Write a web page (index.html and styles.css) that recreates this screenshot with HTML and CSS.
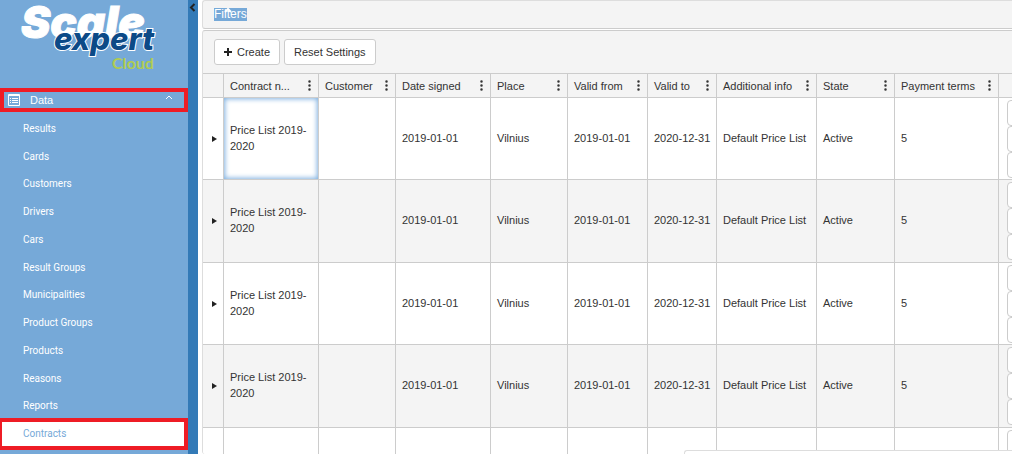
FILE: index.html
```html
<!DOCTYPE html>
<html lang="en">
<head>
    <meta charset="UTF-8">
    <meta name="viewport" content="width=device-width, initial-scale=1.0">
    <title>Contracts</title>
    <link rel="stylesheet" href="styles.css">
</head>
<body>

    <aside class="sidebar">
        <svg class="logo" viewBox="0 0 188 88" role="img" aria-label="Scale expert Cloud">
            <text class="logo-scale" x="21" y="38">Scale</text>
            <text class="logo-expert" x="54" y="50">expert</text>
            <text class="logo-cloud" x="112" y="69">Cloud</text>
        </svg>

        <button class="menu-group" type="button">
            <svg class="menu-icon" viewBox="0 0 12 12">
                <path fill="#fff" fill-rule="evenodd" d="M1 0h10a1 1 0 0 1 1 1v10a1 1 0 0 1-1 1H1a1 1 0 0 1-1-1V1a1 1 0 0 1 1-1zM1 2v9h10V2z"/>
                <path stroke="#fff" d="M2 4.500h1M4 4.500h6M2 6.500h1M4 6.500h6M2 8.500h1M4 8.500h6"/>
            </svg>
            <span>Data</span>
            <svg class="menu-caret" viewBox="0 0 8 5"><path d="M1 4l3-3 3 3" fill="none" stroke="#fff"/></svg>
        </button>

        <nav class="menu">
            <a href="#">Results</a>
            <a href="#">Cards</a>
            <a href="#">Customers</a>
            <a href="#">Drivers</a>
            <a href="#">Cars</a>
            <a href="#">Result Groups</a>
            <a href="#">Municipalities</a>
            <a href="#">Product Groups</a>
            <a href="#">Products</a>
            <a href="#">Reasons</a>
            <a href="#">Reports</a>
            <a href="#" class="active">Contracts</a>
        </nav>
    </aside>

    <button class="collapse" type="button" aria-label="Collapse menu">
        <svg viewBox="0 0 7 9"><path d="M5.500 1L2 4.500 5.500 8" fill="none" stroke="#222" stroke-width="2"/></svg>
    </button>

    <main class="content">
        <section class="filters">
            <a href="#" class="filters-title">Filters<svg class="filters-caret" viewBox="0 0 8 5"><path d="M1 4l3-3 3 3" fill="none" stroke="#fff" stroke-width="2"/></svg></a>
        </section>

        <section class="grid">
            <div class="toolbar">
                <button class="btn" type="button"><svg class="plus" viewBox="0 0 8 8"><path d="M4 0v8M0 4h8" stroke="#222" stroke-width="2"/></svg>Create</button>
                <button class="btn" type="button">Reset Settings</button>
            </div>

            <table>
                <colgroup>
                    <col class="col-expand">
                    <col class="col-number">
                    <col class="col-customer">
                    <col class="col-signed">
                    <col class="col-place">
                    <col class="col-from">
                    <col class="col-to">
                    <col class="col-info">
                    <col class="col-state">
                    <col class="col-payment">
                    <col>
                </colgroup>
                <thead>
                    <tr>
                        <th></th>
                        <th><div class="head"><span>Contract n...</span></div></th>
                        <th><div class="head"><span>Customer</span></div></th>
                        <th><div class="head"><span>Date signed</span></div></th>
                        <th><div class="head"><span>Place</span></div></th>
                        <th><div class="head"><span>Valid from</span></div></th>
                        <th><div class="head"><span>Valid to</span></div></th>
                        <th><div class="head"><span>Additional info</span></div></th>
                        <th><div class="head"><span>State</span></div></th>
                        <th><div class="head"><span>Payment terms</span></div></th>
                        <th></th>
                    </tr>
                </thead>
                <tbody id="rows"></tbody>
            </table>
        </section>
    </main>

    <div class="status"></div>

    <script src="script.js"></script>
</body>
</html>
```
FILE: styles.css
```css
* {
    box-sizing: border-box;
}

body {
    margin: 0;
    padding: 0 2px 2px 0;
    height: 100vh;
    display: flex;
    overflow: hidden;
    background-color: #fff;
    color: #333;
    font-family: "Liberation Sans", Arial, sans-serif;
    font-size: 11px;
    line-height: 16px;
}

button {
    font: inherit;
    color: inherit;
    cursor: pointer;
}

a {
    text-decoration: none;
}

svg {
    display: block;
}

/* Sidebar */
.sidebar {
    flex: 0 0 188px;
    display: flex;
    flex-direction: column;
    padding-bottom: 6px;
    background-color: #76a9d8;
    overflow: hidden;
}

.logo {
    width: 100%;
    flex: none;
}

.logo-scale {
    font: italic 900 44px Inter, sans-serif;
    fill: #fff;
    stroke: #fff;
    stroke-width: 1px;
}

.logo-expert {
    font: italic 800 31px Inter, sans-serif;
    fill: #0c4a87;
    stroke: #fff;
    stroke-width: 2px;
    paint-order: stroke;
}

.logo-cloud {
    font: 700 16px Lato, sans-serif;
    fill: #b0cc50;
}

.menu-group {
    flex: none;
    display: flex;
    align-items: center;
    height: 24px;
    padding: 0 11px 0 4px;
    border: 4px solid #ee1c25;
    background: none;
    color: #fff;
}

.menu-icon {
    width: 12px;
    height: 12px;
    margin-right: 10px;
}

.menu-caret {
    width: 8px;
    height: 5px;
    margin: 0 0 6px auto;
}

.menu {
    flex: 1;
    display: flex;
    flex-direction: column;
    padding-top: 3px;
}

.menu a {
    flex: 1;
    display: flex;
    align-items: center;
    padding-left: 23px;
    color: #fff;
    font-family: Roboto, sans-serif;
    font-size: 10px;
}

.menu a.active {
    margin-right: 2px;
    background-color: #fff;
    color: #76a9d8;
    outline: 4px solid #ee1c25;
    outline-offset: -2px;
}

.collapse {
    flex: 0 0 10px;
    padding: 3px 1px;
    border: none;
    background-color: #337ab7;
    display: flex;
}

.collapse svg {
    width: 7px;
    height: 9px;
}

/* Content */
.content {
    flex: 1;
    min-width: 0;
    margin-left: 4px;
    display: flex;
    flex-direction: column;
    gap: 1px;
    overflow: hidden;
}

.filters,
.grid {
    background-color: #f4f4f4;
    border-left: 1px solid #ddd;
    border-radius: 3px 0 0 3px;
}

.filters {
    flex: none;
    padding: 7px 11px;
    border-top: 1px solid #ddd;
    border-bottom: 1px solid #ccc;
    display: flex;
}

.filters-title {
    position: relative;
    line-height: 13px;
    font-size: 12px;
    background-color: #76a9d8;
    color: #fff;
}

.filters-caret {
    position: absolute;
    top: 0;
    left: 10px;
    width: 8px;
    height: 5px;
}

.grid {
    flex: 1;
    border-top: 1px solid #ccc;
    overflow: hidden;
}

.toolbar {
    display: flex;
    gap: 4px;
    padding: 8px 11px;
}

.btn {
    display: flex;
    align-items: center;
    height: 26px;
    padding: 0 9px;
    border: 1px solid #ccc;
    border-radius: 3px;
    background-color: #fff;
}

.plus {
    width: 8px;
    height: 8px;
    margin-right: 5px;
}

table {
    width: 100%;
    table-layout: fixed;
    border-collapse: separate;
    border-spacing: 0;
    border-top: 1px solid #ccc;
}

.col-expand { width: 21px; }
.col-number { width: 95px; }
.col-customer { width: 77px; }
.col-signed { width: 95px; }
.col-place { width: 77px; }
.col-from { width: 80px; }
.col-to { width: 69px; }
.col-info { width: 100px; }
.col-state { width: 78px; }
.col-payment { width: 104px; }

th,
td {
    padding: 0 0 0 6px;
    border-right: 1px solid #ccc;
    border-bottom: 1px solid #ccc;
    text-align: left;
    font-weight: normal;
}

td {
    padding-bottom: 2px;
}

th:last-child,
td:last-child {
    border-right: none;
}

th {
    height: 24px;
}

.head {
    display: flex;
    align-items: center;
    justify-content: space-between;
    padding-right: 5px;
    white-space: nowrap;
}

.column-menu {
    padding: 2px;
    border: none;
    background: none;
}

.column-menu svg {
    width: 3px;
    height: 11px;
}

tbody tr {
    height: 82px;
    background-color: #fff;
}

tbody tr:nth-child(even) {
    height: 83px;
    background-color: #f4f4f4;
}

td.focused {
    box-shadow: inset 0 0 5px 1px #7fb0e0;
}

.expand {
    padding: 3px;
    border: none;
    background: none;
}

.expand svg {
    width: 5px;
    height: 6px;
}

td.actions {
    padding: 0 0 0 8px;
    overflow: hidden;
}

.actions button {
    display: block;
    width: 60px;
    height: 26px;
    border: 1px solid #ccc;
    border-radius: 4px;
    background-color: #fff;
}

.status {
    position: fixed;
    right: 2px;
    bottom: 2px;
    left: 684px;
    height: 4px;
    border: 1px solid #ddd;
    border-width: 1px 0 0 1px;
    border-radius: 3px 0 0 0;
    background-color: #fff;
}
```
FILE: script.js
```js
const rows = document.getElementById('rows');

const contract = ['Price List 2019-2020', '', '2019-01-01', 'Vilnius', '2019-01-01',
    '2020-12-31', 'Default Price List', 'Active', '5'];

function addRow(values) {
    const row = document.createElement('tr');
    row.innerHTML = `
        <td><button class="expand" type="button" aria-label="Expand row">
            <svg viewBox="0 0 5 6"><path d="M0 0l5 3-5 3z" fill="#222"/></svg>
        </button></td>
        ${values.map(value => `<td>${value}</td>`).join('')}
        <td class="actions">
            <button type="button" aria-label="Edit"></button>
            <button type="button" aria-label="Copy"></button>
            <button type="button" aria-label="Delete"></button>
        </td>`;
    rows.appendChild(row);
}

for (let i = 0; i < 4; i++) {
    addRow(contract);
}
addRow(contract.map(() => ''));

rows.rows[0].cells[1].classList.add('focused');

// column menu buttons
document.querySelectorAll('.head').forEach(head => {
    head.insertAdjacentHTML('beforeend', `
        <button class="column-menu" type="button" aria-label="Column menu">
            <svg viewBox="0 0 3 11"><path d="M1.500 1.500v0M1.500 5.500v0M1.500 9.500v0" stroke="#333" stroke-width="2.500" stroke-linecap="round"/></svg>
        </button>`);
});
```
